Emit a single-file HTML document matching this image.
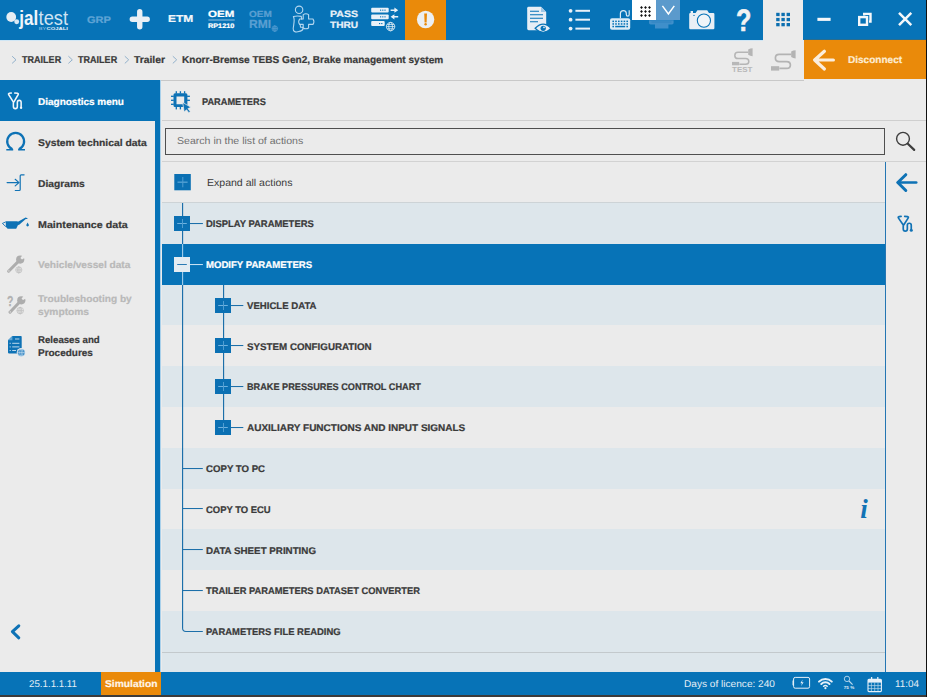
<!DOCTYPE html>
<html><head><meta charset="utf-8"><title>Jaltest - Parameters</title>
<style>
html,body{margin:0;padding:0}
body{width:927px;height:697px;overflow:hidden;background:#ebebeb;font-family:"Liberation Sans",sans-serif;position:relative}
div,span,svg{position:absolute;box-sizing:border-box}
.t{white-space:nowrap;line-height:20px;height:20px;transform-origin:0 50%;}
.b{-webkit-text-stroke:0.22px currentColor}
.row{left:162px;width:723px}
</style></head><body>
<!-- top bar -->
<div id="topbar" style="left:0;top:0;width:926px;height:40px;background:#0773b7"></div>
<div id="topline" style="left:0;top:39.5px;width:763px;height:1px;background:#cfe6f5"></div>
<div id="warn" style="left:405.4px;top:0;width:40.4px;height:39.6px;background:#ea8a0a"></div>
<div id="whitebox" style="left:632.2px;top:0;width:24px;height:19.7px;background:#fff"></div>
<div id="chevbox" style="left:656.2px;top:0;width:23.7px;height:19.7px;background:#5b9acc"></div>
<div id="gridbox" style="left:762.8px;top:0;width:40.7px;height:41px;background:#ebebeb"></div>
<!-- second bar -->
<div id="disconnect" style="left:803.5px;top:40px;width:122.5px;height:39.4px;background:#ea8a0a"></div>
<div id="winline" style="left:803.5px;top:38.6px;width:122.5px;height:1.6px;background:#2a6d8e"></div>
<div id="hline0" style="left:160px;top:79.9px;width:644px;height:1px;background:#c8c8c8"></div>
<!-- sidebar -->
<div id="sidehead" style="left:0;top:79.7px;width:160px;height:41px;background:#0773b7"></div>
<div id="strip" style="left:155px;top:120px;width:5px;height:552px;background:#0773b7"></div>
<div id="strip2" style="left:160px;top:80px;width:1.3px;height:592px;background:#a9d0ea"></div>
<!-- content -->
<div id="hline1" style="left:162px;top:120.3px;width:764px;height:1.2px;background:#cfcfcf"></div>
<div id="search" style="left:165px;top:128px;width:720px;height:26.5px;border:1px solid #4f4f4f;background:#ebebeb"></div>
<div id="hline2" style="left:162px;top:160.8px;width:764px;height:1.2px;background:#d2d2d2"></div>
<div id="hline3" style="left:162px;top:202px;width:723px;height:1px;background:#cdd3d6"></div>
<div class="row" style="top:203.0px;height:40.8px;background:#dde6eb"></div>
<div class="row" style="top:243.8px;height:40.8px;background:#0773b7"></div>
<div class="row" style="top:284.6px;height:40.8px;background:#dde6eb"></div>
<div class="row" style="top:325.4px;height:40.8px;background:#ebebeb"></div>
<div class="row" style="top:366.2px;height:40.8px;background:#dde6eb"></div>
<div class="row" style="top:407.0px;height:40.8px;background:#ebebeb"></div>
<div class="row" style="top:447.8px;height:40.8px;background:#dde6eb"></div>
<div class="row" style="top:488.6px;height:40.8px;background:#ebebeb"></div>
<div class="row" style="top:529.4px;height:40.8px;background:#dde6eb"></div>
<div class="row" style="top:570.2px;height:40.8px;background:#ebebeb"></div>
<div class="row" style="top:611.0px;height:40.8px;background:#dde6eb"></div>
<div id="tail" style="left:162px;top:651.8px;width:723px;height:21px;background:#dde6eb"></div>
<div id="hline4" style="left:162px;top:651.6px;width:723px;height:1.2px;background:#c3c9cc"></div>
<div id="rline" style="left:885px;top:162px;width:1.25px;height:510px;background:#2476b3"></div>
<!-- status bar -->
<div id="status" style="left:0;top:672px;width:926px;height:23.5px;background:#0773b7"></div>
<div id="sim" style="left:101.4px;top:672px;width:59.4px;height:22.6px;background:#ea8a0a"></div>
<div id="botline" style="left:0;top:695.3px;width:927px;height:2px;background:#3b3b3b"></div>
<div id="rightline" style="left:925.8px;top:0;width:1.2px;height:697px;background:#111"></div>
<!-- ===== top bar icons (one overlay svg, page coordinates) ===== -->
<svg id="topicons" width="927" height="82" viewBox="0 0 927 82" style="left:0;top:0">
 <!-- logo -->
 <circle cx="11.2" cy="17" r="4.9" fill="#e6edf3"/>
 <circle cx="16.7" cy="21.8" r="2.45" fill="#d9e9f5"/>
 <text x="19.2" y="24.6" font-family="Liberation Sans, sans-serif" font-size="20" font-weight="bold" fill="#f0f5fa" textLength="19" lengthAdjust="spacingAndGlyphs">jal</text>
 <text x="38.6" y="24.6" font-family="Liberation Sans, sans-serif" font-size="20" fill="#cfe3f3" textLength="29.4" lengthAdjust="spacingAndGlyphs">test</text>
 <text x="38.8" y="29.6" font-family="Liberation Sans, sans-serif" font-size="3.8" fill="#9cc6e6" textLength="7.5" lengthAdjust="spacingAndGlyphs">BY</text>
 <text x="46.6" y="29.6" font-family="Liberation Sans, sans-serif" font-size="3.8" font-weight="bold" fill="#e6f0f8" textLength="21.4" lengthAdjust="spacingAndGlyphs">COJALI</text>
 <!-- big plus -->
 <path d="M132.3,19.3H147.2M139.75,11.8V26.8" stroke="#e9eff5" stroke-width="5.4" stroke-linecap="round" fill="none"/>
 <!-- OEM underline -->
 <rect x="208.4" y="19.6" width="26.3" height="0.8" fill="#b9d7ee"/>
 <!-- tiny globe after RMI -->
 <g stroke="#5a9fd2" stroke-width="0.7" fill="none"><circle cx="274.8" cy="28.6" r="2.8"/><path d="M272,28.6H277.6M274.8,25.8V31.4"/><ellipse cx="274.8" cy="28.6" rx="1.3" ry="2.8"/></g>
 <!-- person + plus (outline) -->
 <g stroke="#b4d7f0" stroke-width="1.1" fill="none" stroke-linejoin="round" stroke-linecap="round">
  <circle cx="299.1" cy="9.8" r="3.7"/>
  <path d="M293.4,16.6 C295.5,15.9 299,15.9 301.3,16.4 L301.6,19.2 M293.4,16.6 C295.2,20 293.6,24.5 293.2,28.5 C293,31.5 295.5,32.3 297.5,31.8 C299.8,31.2 302.5,31 303,29 L302.7,27.2 L300.5,27.3 L300.2,24.5"/>
  <path d="M303.2,14.6 Q305.9,13 308.6,14.6 V19 H313 Q314.8,21.7 313,24.4 H308.6 V28 Q305.9,29.6 303.2,28 V24.4 H299.6 Q297.8,21.7 299.6,19 H303.2 Z"/>
 </g>
 <!-- server / pass-thru icon -->
 <g fill="#e9f1f8">
  <rect x="371.2" y="7.7" width="17.5" height="4.9" rx="1"/>
  <rect x="371.2" y="14.4" width="17.5" height="4.9" rx="1"/>
  <rect x="371.2" y="21.1" width="13.5" height="4.9" rx="1"/>
  <path d="M390.6,9.4H394.4V7.6L398.2,10.2L394.4,12.8V11H390.6Z"/>
  <path d="M398.2,16H394.4V14.2L390.6,16.8L394.4,19.4V17.6H398.2Z"/>
 </g>
 <g fill="#0773b7"><rect x="380" y="9.6" width="1.2" height="1.1"/><rect x="382.2" y="9.6" width="1.2" height="1.1"/><rect x="384.4" y="9.6" width="1.2" height="1.1"/>
  <rect x="380" y="16.3" width="1.2" height="1.1"/><rect x="382.2" y="16.3" width="1.2" height="1.1"/><rect x="384.4" y="16.3" width="1.2" height="1.1"/>
  <rect x="379" y="23" width="1.2" height="1.1"/><rect x="381.2" y="23" width="1.2" height="1.1"/></g>
 <circle cx="390.6" cy="26.6" r="5.2" fill="#0773b7"/>
 <g stroke="#e9f1f8" stroke-width="0.8" fill="none"><circle cx="390.6" cy="26.6" r="4.2"/><ellipse cx="390.6" cy="26.6" rx="1.9" ry="4.2"/><path d="M386.4,26.6H394.8M387.2,24.4H394M387.2,28.8H394"/></g>
 <!-- warning -->
 <circle cx="425.6" cy="19.5" r="8.7" fill="#eceff2"/>
 <path d="M424.2,13.6H427L426.6,22.4H424.6Z" fill="#ea8a0a"/><circle cx="425.6" cy="24.2" r="1.2" fill="#ea8a0a"/>
 <!-- document + eye -->
 <path d="M528.6,6.8H541L546.2,12V28.8Q546.2,30.2 544.8,30.2H528.6Q527.2,30.2 527.2,28.8V8.2Q527.2,6.8 528.6,6.8Z" fill="#e6eef6"/>
 <path d="M541,6.8L546.2,12H541Z" fill="#9fc7e6"/>
 <g stroke="#0773b7" stroke-width="1.1"><path d="M530,11.3H539M530,14.8H543M530,18.3H543M530,21.8H538"/></g>
 <path d="M535.2,28.3Q543.2,20 551,28.3Q543.2,36.4 535.2,28.3Z" fill="#e6eef6" stroke="#0773b7" stroke-width="1.3"/>
 <circle cx="543.2" cy="28.3" r="2.6" fill="#0773b7"/><circle cx="544" cy="27.4" r="0.8" fill="#e6eef6"/>
 <!-- list -->
 <g fill="#e9f1f8"><circle cx="570.6" cy="10.8" r="1.9"/><circle cx="570.6" cy="19.7" r="1.9"/><circle cx="570.6" cy="28.6" r="1.9"/>
  <rect x="575.4" y="9.8" width="14.6" height="2"/><rect x="575.4" y="18.7" width="14.6" height="2"/><rect x="575.4" y="27.6" width="14.6" height="2"/></g>
 <!-- keyboard -->
 <rect x="610" y="18.3" width="20.2" height="11.4" rx="2" fill="#dcebf6"/>
 <g fill="#0773b7"><rect x="612.4" y="20.6" width="1.6" height="1.5"/><rect x="615.2" y="20.6" width="1.6" height="1.5"/><rect x="618" y="20.6" width="1.6" height="1.5"/><rect x="620.8" y="20.6" width="1.6" height="1.5"/><rect x="623.6" y="20.6" width="1.6" height="1.5"/><rect x="626.4" y="20.6" width="1.6" height="1.5"/>
  <rect x="612.4" y="23.2" width="1.6" height="1.5"/><rect x="615.2" y="23.2" width="1.6" height="1.5"/><rect x="618" y="23.2" width="1.6" height="1.5"/><rect x="620.8" y="23.2" width="1.6" height="1.5"/><rect x="623.6" y="23.2" width="1.6" height="1.5"/><rect x="626.4" y="23.2" width="1.6" height="1.5"/>
  <rect x="612.4" y="25.8" width="1.6" height="1.5"/><rect x="615.2" y="25.8" width="10" height="1.5"/><rect x="626.4" y="25.8" width="1.6" height="1.5"/></g>
 <path d="M620.4,18.3V13.6Q620.4,10.6 623.4,10.6Q626.3,10.6 626.3,13.6V14.6Q626.3,16.2 627.8,16.2Q629.2,16.2 629.2,14.6V10.2" stroke="#dcebf6" stroke-width="1.2" fill="none"/>
 <!-- 3x3 black dots in white box -->
 <g fill="#111"><path d="M641.5,6.1l1.4,1.4l-1.4,1.4l-1.4,-1.4zM645.5,6.1l1.4,1.4l-1.4,1.4l-1.4,-1.4zM649.5,6.1l1.4,1.4l-1.4,1.4l-1.4,-1.4zM641.5,10.1l1.4,1.4l-1.4,1.4l-1.4,-1.4zM645.5,10.1l1.4,1.4l-1.4,1.4l-1.4,-1.4zM649.5,10.1l1.4,1.4l-1.4,1.4l-1.4,-1.4zM641.5,14.1l1.4,1.4l-1.4,1.4l-1.4,-1.4zM645.5,14.1l1.4,1.4l-1.4,1.4l-1.4,-1.4zM649.5,14.1l1.4,1.4l-1.4,1.4l-1.4,-1.4z"/></g>
 <!-- chevron in light box -->
 <path d="M662.4,5.9L668.4,14L674.3,5.9" stroke="#ffffff" stroke-width="1.5" fill="none"/>
 <!-- dim connector under boxes -->
 <path d="M649,20.2H673.6V23Q673.6,24.4 672,24.4H668.4V28.4H655V24.4H650.6Q649,24.4 649,23Z" fill="#3f8fca"/>
 <path d="M651.5,22H671.5" stroke="#2f82c0" stroke-width="1"/>
 <!-- camera -->
 <path d="M690.4,12.9H695.6L697.4,10.2H707.2L709,12.9H713.2Q714.4,12.9 714.4,14.1V28.1Q714.4,29.3 713.2,29.3H690.4Q689.2,29.3 689.2,28.1V14.1Q689.2,12.9 690.4,12.9Z" fill="#e9eff5"/>
 <rect x="690.6" y="11" width="2.4" height="2" fill="#e9eff5"/>
 <circle cx="703.9" cy="20.6" r="6.6" fill="#f0f4f8" stroke="#0773b7" stroke-width="1.1"/>
 <circle cx="694" cy="15.4" r="0.7" fill="#0773b7"/>
 <!-- grid 3x3 blue -->
 <g fill="#0c6fb0">
  <rect x="776.2" y="12.8" width="3.4" height="3.3"/><rect x="781.4" y="12.8" width="3.4" height="3.3"/><rect x="786.6" y="12.8" width="3.4" height="3.3"/>
  <rect x="776.2" y="17.9" width="3.4" height="3.3"/><rect x="781.4" y="17.9" width="3.4" height="3.3"/><rect x="786.6" y="17.9" width="3.4" height="3.3"/>
  <rect x="776.2" y="23" width="3.4" height="3.3"/><rect x="781.4" y="23" width="3.4" height="3.3"/><rect x="786.6" y="23" width="3.4" height="3.3"/></g>
 <!-- window controls -->
 <rect x="817.4" y="17.8" width="13.2" height="3.1" fill="#f4f7fa"/>
 <g stroke="#f4f7fa" stroke-width="2.4" fill="none"><path d="M864.2,15.4V13.9H870.5V21.6H869"/><rect x="859.2" y="17.1" width="7.8" height="7.7" fill="none"/></g>
 <path d="M899,12.8L911.3,25.2M911.3,12.8L899,25.2" stroke="#f4f7fa" stroke-width="2.5" fill="none"/>
 <!-- TEST cable icon (dim) -->
 <g stroke="#b5b5b5" stroke-width="1.5" fill="none"><path d="M748.2,52.2H738Q734.8,52.2 734.8,55.4Q734.8,58.6 738,58.6H745.6Q748.8,58.6 748.8,61.4Q748.8,64.2 745.6,64.2H739.4"/></g>
 <path d="M748.2,49.6Q750.2,48.2 752.6,48.2V56.2Q750.2,56.2 748.2,54.8Z" fill="#b5b5b5"/>
 <rect x="732" y="61.9" width="7.2" height="3.4" fill="#b8b8b8"/>
 <text x="732" y="71.8" font-family="Liberation Sans, sans-serif" font-size="7" font-weight="bold" fill="#b8b8b8" textLength="20.4" lengthAdjust="spacingAndGlyphs">TEST</text>
 <!-- cable icon (dim) -->
 <g stroke="#b3b3b3" stroke-width="1.7" fill="none"><path d="M791.4,54.4H779.2Q775.4,54.4 775.4,58Q775.4,61.6 779.2,61.6H786.6Q790.4,61.6 790.4,65Q790.4,68.4 786.6,68.4H779.4"/></g>
 <path d="M791.2,51.6Q793.2,50.2 795.6,50.2V58.4Q793.2,58.4 791.2,57Z" fill="#b3b3b3"/>
 <rect x="771" y="66.2" width="8.2" height="4.4" fill="#b5b5b5"/>
 <!-- disconnect arrow -->
 <path d="M814.6,60H833.4M824.4,51.2L814.6,60L824.4,69" stroke="#fbeedd" stroke-width="3.2" fill="none" stroke-linecap="round" stroke-linejoin="round"/>
<!-- breadcrumb chevrons -->
 <g stroke="#93b2cc" stroke-width="1" fill="none"><path d="M12.1,56.2L16,59.8L12.1,63.4M68.4,56.2L72.3,59.8L68.4,63.4M124.8,56.2L128.7,59.8L124.8,63.4M172.8,56.2L176.7,59.8L172.8,63.4"/></g>
</svg>
<svg id="mainicons" width="927" height="697" viewBox="0 0 927 697" style="left:0;top:0">
<g transform="translate(7.8,92.6) scale(0.97,1.06)" stroke="#f2f6fa" stroke-width="1.6" fill="none" stroke-linejoin="round" stroke-linecap="round"><path d="M3.6,0.4L1.6,0.6Q0.2,0.9 1,2.1L5.75,9V13.1A2.05,2.05 0 0 0 9.85,13.1V9.2A1.95,1.95 0 0 1 13.75,9.2V13.2M6.2,9L10.6,2.1Q11.4,0.9 10,0.6L7.2,0.4"/><circle cx="13.7" cy="14.3" r="1.2" fill="#f2f6fa" stroke="none"/></g>
<g transform="translate(897.5,216)" stroke="#1273b5" stroke-width="1.7" fill="none" stroke-linejoin="round" stroke-linecap="round"><path d="M3.6,0.4L1.6,0.6Q0.2,0.9 1,2.1L5.75,9V13.1A2.05,2.05 0 0 0 9.85,13.1V9.2A1.95,1.95 0 0 1 13.75,9.2V13.2M6.2,9L10.6,2.1Q11.4,0.9 10,0.6L7.2,0.4"/><circle cx="13.8" cy="14.2" r="1.5" fill="#1273b5" stroke="none"/></g>
<g stroke="#0e72b5" fill="none"><path d="M12.5,149.2A8.45,8.45 0 1 1 18.8,149.2" stroke-width="2.2"/><path d="M6.3,149.75H13.2M18.1,149.75H25" stroke-width="1.7"/></g>
<g stroke="#1273b5" stroke-width="1.2" fill="none" stroke-linecap="round" stroke-linejoin="round"><path d="M7.1,182.6H19M15.2,179.3L19,182.6L15.2,185.9"/><path d="M24.1,174.8H21.2Q20.2,174.8 20.2,175.8V189.5Q20.2,190.5 19.2,190.5H15.3"/></g>
<g fill="#0e72b5"><path d="M5.8,221.3H17.2L19.2,222.6L16.2,228.8H7.6L5.8,226.8Z"/><path d="M16.6,222.4L25.6,217.6L27.6,218.2L27.3,219L25.8,218.9L18.6,225.2Z"/><path d="M27.6,222.6Q29.2,225 28.7,225.8Q27.6,227 26.5,225.8Q26,225 27.6,222.6Z"/></g>
<path d="M5.8,221.9L2.4,223.4L5.8,226.6" stroke="#0e72b5" stroke-width="0.9" fill="none"/>
<path d="M8.6,271.2L20.2,259.6" stroke="#adadad" stroke-width="3" stroke-linecap="round"/><circle cx="20.2" cy="259.6" r="4.1" fill="#adadad"/><path d="M20.4,258.0L23.4,254.00000000000003L26.0,257.0L22.0,259.40000000000003Z" fill="#ebebeb"/><circle cx="8.9" cy="270.9" r="0.7" fill="#e4e4e4"/>
<g stroke="#bdbdbd" stroke-width="0.7" fill="none"><circle cx="18.8" cy="269.9" r="3.1"/><ellipse cx="18.8" cy="269.9" rx="1.40" ry="3.1"/><path d="M15.700000000000001,269.9H21.900000000000002M18.8,266.79999999999995V273.0"/></g>
<path d="M10,312.2L21.3,300.3" stroke="#adadad" stroke-width="3" stroke-linecap="round"/><circle cx="21.3" cy="300.3" r="4.1" fill="#adadad"/><path d="M21.5,298.7L24.5,294.7L27.1,297.7L23.1,300.1Z" fill="#ebebeb"/><circle cx="10.3" cy="311.9" r="0.7" fill="#e4e4e4"/>
<g stroke="#bdbdbd" stroke-width="0.7" fill="none"><circle cx="20.2" cy="310.6" r="3.3"/><ellipse cx="20.2" cy="310.6" rx="1.48" ry="3.3"/><path d="M16.9,310.6H23.5M20.2,307.3V313.90000000000003"/></g>
<text x="6.9" y="306" font-family="Liberation Sans, sans-serif" font-size="14" font-weight="bold" fill="#b2b2b2" stroke="#b2b2b2" stroke-width="0.3" textLength="6.4" lengthAdjust="spacingAndGlyphs">?</text>
<path d="M12.4,335.9H20.9Q21.7,335.9 21.7,336.7V352.6Q21.7,353.4 20.9,353.4H8.8Q8,353.4 8,352.6V340.2Z" fill="#0e72b5"/>
<path d="M12.4,335.9V340.2H8Z" fill="#5ea5d6"/>
<g stroke="#cfe3f2" stroke-width="0.9"><path d="M15,339H19.4M9.6,343.3H10.8M12.2,343.3H19.4M9.6,346.9H10.8M12.2,346.9H19.4M9.6,350.5H10.8M12.2,350.5H16"/></g>
<circle cx="21.3" cy="352.6" r="4.6" fill="#ebebeb"/><circle cx="21.3" cy="352.6" r="3.7" fill="#2a80bf"/>
<g stroke="#cfe3f2" stroke-width="0.6" fill="none"><circle cx="21.3" cy="352.6" r="3.7"/><ellipse cx="21.3" cy="352.6" rx="1.67" ry="3.7"/><path d="M17.6,352.6H25.0M21.3,348.90000000000003V356.3"/></g>
<path d="M18.8,625.8L12.4,631.7L18.8,637.8" stroke="#0e72b5" stroke-width="3" fill="none" stroke-linecap="round" stroke-linejoin="round"/>
<g fill="#0e72b5">
<path fill-rule="evenodd" d="M175,93.3H185.9Q187.4,93.3 187.4,94.8V105.6Q187.4,107.1 185.9,107.1H175Q173.5,107.1 173.5,105.6V94.8Q173.5,93.3 175,93.3ZM176.5,96.6V104.2H184.2V96.6Z"/>
<rect x="175.65" y="91.2" width="1.3" height="2.4"/>
<rect x="179.75" y="91.2" width="1.3" height="2.4"/>
<rect x="183.95" y="91.2" width="1.3" height="2.4"/>
<rect x="175.65" y="106.8" width="1.3" height="2.6"/>
<rect x="179.75" y="106.8" width="1.3" height="2.6"/>
<rect x="171" y="95.64999999999999" width="2.8" height="1.3"/>
<rect x="171" y="99.64999999999999" width="2.8" height="1.3"/>
<rect x="171" y="103.64999999999999" width="2.8" height="1.3"/>
<rect x="187.1" y="95.64999999999999" width="2.8" height="1.3"/>
<rect x="187.1" y="99.64999999999999" width="2.8" height="1.3"/>
</g>
<path d="M182.7,102.5L191,107.3L187.9,108.6L190.3,111.6L188.8,112.7L186.5,109.7L184.2,112Z" fill="#0e72b5" stroke="#ebebeb" stroke-width="0.7"/>
<circle cx="903" cy="138.8" r="6.4" stroke="#3d3d3d" stroke-width="1.4" fill="none"/><path d="M907.8,143.8L914.2,149.9" stroke="#3d3d3d" stroke-width="2.2" stroke-linecap="round"/>
<path d="M898,182.5H916.2" stroke="#0e72b5" stroke-width="2.7" stroke-linecap="round" fill="none"/><path d="M905.8,174.7L897.8,182.5L905.8,190.5" stroke="#0e72b5" stroke-width="3" stroke-linecap="round" stroke-linejoin="round" fill="none"/>
<rect x="182" y="203" width="1.15" height="41" fill="#1c6fa9"/>
<rect x="182" y="244" width="1.15" height="41" fill="#9ccbea"/>
<rect x="182" y="285" width="1.15" height="343" fill="#1c6fa9"/>
<path d="M182.55,628Q182.55,631.5 186,631.5H202.8" stroke="#1c6fa9" stroke-width="1.1" fill="none"/>
<rect x="223" y="285" width="1.15" height="142" fill="#1c6fa9"/>
<rect x="190" y="223" width="12.9" height="1.05" fill="#1c6fa9"/>
<rect x="174" y="216" width="16" height="15" fill="#0b70b3"/><rect x="177.2" y="223.0" width="9.6" height="1" fill="#6fb2df"/><rect x="182.0" y="219" width="1" height="9" fill="#4f9dd2"/>
<rect x="190" y="264" width="12.9" height="1.05" fill="#c5e0f3"/>
<rect x="174" y="257" width="16" height="15" fill="#e4ecf2"/><rect x="177.2" y="264.0" width="9.6" height="1" fill="#2b7ab3"/>
<rect x="231" y="305" width="12.3" height="1.05" fill="#1c6fa9"/>
<rect x="215" y="298" width="16" height="15" fill="#0b70b3"/><rect x="218.2" y="305.0" width="9.6" height="1" fill="#6fb2df"/><rect x="223.0" y="301" width="1" height="9" fill="#4f9dd2"/>
<rect x="231" y="345" width="12.3" height="1.05" fill="#1c6fa9"/>
<rect x="215" y="338" width="16" height="15" fill="#0b70b3"/><rect x="218.2" y="345.0" width="9.6" height="1" fill="#6fb2df"/><rect x="223.0" y="341" width="1" height="9" fill="#4f9dd2"/>
<rect x="231" y="386" width="12.3" height="1.05" fill="#1c6fa9"/>
<rect x="215" y="379" width="16" height="15" fill="#0b70b3"/><rect x="218.2" y="386.0" width="9.6" height="1" fill="#6fb2df"/><rect x="223.0" y="382" width="1" height="9" fill="#4f9dd2"/>
<rect x="231" y="427" width="12.3" height="1.05" fill="#1c6fa9"/>
<rect x="215" y="420" width="16" height="15" fill="#0b70b3"/><rect x="218.2" y="427.0" width="9.6" height="1" fill="#6fb2df"/><rect x="223.0" y="423" width="1" height="9" fill="#4f9dd2"/>
<rect x="182" y="468" width="20.8" height="1.05" fill="#1c6fa9"/>
<rect x="182" y="508" width="20.8" height="1.05" fill="#1c6fa9"/>
<rect x="182" y="549" width="20.8" height="1.05" fill="#1c6fa9"/>
<rect x="182" y="590" width="20.8" height="1.05" fill="#1c6fa9"/>
<rect x="174.3" y="174" width="16.5" height="16.3" fill="#0b70b3"/><rect x="177.5" y="181.65" width="10.1" height="1" fill="#6fb2df"/><rect x="182.3" y="177" width="1" height="10.3" fill="#4f9dd2"/>
<text x="860.2" y="518" font-family="Liberation Serif, serif" font-size="27" font-weight="bold" font-style="italic" fill="#1273b5">i</text>
<rect x="793.6" y="677.4" width="16" height="10.8" rx="1.6" stroke="#e6f0f8" stroke-width="1" fill="none"/><path d="M793.2,680.4V685.2" stroke="#e6f0f8" stroke-width="1.4"/>
<path d="M802.6,679.4L800.4,683.2H802L801,686.2L803.6,682.2H802Z" fill="#e6f0f8"/>
<g stroke="#e6f0f8" fill="none" stroke-width="2" stroke-linecap="round"><path d="M819,681.6A9,9 0 0 1 831.8,681.6"/><path d="M821.3,684A5.8,5.8 0 0 1 829.5,684"/><path d="M823.6,686.3A2.6,2.6 0 0 1 827.2,686.3" stroke-width="1.5"/></g><circle cx="825.4" cy="688.2" r="1.1" fill="#e6f0f8"/>
<circle cx="847" cy="678.9" r="2.7" stroke="#b9d9ef" stroke-width="0.9" fill="none"/><path d="M849,681L852.6,684.6" stroke="#b9d9ef" stroke-width="1.1"/>
<text x="843.8" y="688.9" font-family="Liberation Sans, sans-serif" font-size="3.8" font-weight="bold" fill="#e6f0f8" textLength="10.4" lengthAdjust="spacingAndGlyphs">75 %</text>
<rect x="868" y="679.4" width="13.4" height="12.2" rx="1" stroke="#e6f0f8" stroke-width="1.1" fill="none"/><rect x="868" y="679.4" width="13.4" height="3.2" fill="#e6f0f8"/>
<path d="M871.6,677V681M877.8,677V681" stroke="#e6f0f8" stroke-width="1.3"/>
<path d="M868,685.6H881.4M868,688.6H881.4M871.4,682.6V691.6M874.7,682.6V691.6M878,682.6V691.6" stroke="#e6f0f8" stroke-width="0.7" opacity="0.8"/>
</svg>
<span class="t b" id="t0" style="left:21.9px;top:49.88px;font-size:10px;font-weight:bold;color:#3a3a3a;transform:scaleX(0.9042) rotate(0.03deg);">TRAILER</span>
<span class="t b" id="t1" style="left:78px;top:49.88px;font-size:10px;font-weight:bold;color:#3a3a3a;transform:scaleX(0.9042) rotate(0.03deg);">TRAILER</span>
<span class="t b" id="t2" style="left:134px;top:49.88px;font-size:10px;font-weight:bold;color:#3a3a3a;transform:scaleX(1.0319) rotate(0.03deg);">Trailer</span>
<span class="t b" id="t3" style="left:182px;top:49.88px;font-size:10px;font-weight:bold;color:#3a3a3a;transform:scaleX(1.0063) rotate(0.03deg);">Knorr-Bremse TEBS Gen2, Brake management system</span>
<span class="t b" id="t4" style="left:38.3px;top:92.49px;font-size:9.8px;font-weight:bold;color:#ffffff;transform:scaleX(1.0189) rotate(0.03deg);">Diagnostics menu</span>
<span class="t b" id="t5" style="left:38.3px;top:133.39px;font-size:9.8px;font-weight:bold;color:#3a3a3a;transform:scaleX(1.0560) rotate(0.03deg);">System technical data</span>
<span class="t b" id="t6" style="left:38.3px;top:174.29px;font-size:9.8px;font-weight:bold;color:#3a3a3a;transform:scaleX(1.0455) rotate(0.03deg);">Diagrams</span>
<span class="t b" id="t7" style="left:38.3px;top:215.09px;font-size:9.8px;font-weight:bold;color:#3a3a3a;transform:scaleX(1.0909) rotate(0.03deg);">Maintenance data</span>
<span class="t b" id="t8" style="left:38.3px;top:255.39px;font-size:9.8px;font-weight:bold;color:#b9b9b9;transform:scaleX(1.0343) rotate(0.03deg);">Vehicle/vessel data</span>
<span class="t b" id="t9" style="left:38.3px;top:288.79px;font-size:9.8px;font-weight:bold;color:#b9b9b9;transform:scaleX(1.0308) rotate(0.03deg);">Troubleshooting by</span>
<span class="t b" id="t10" style="left:38.3px;top:302.29px;font-size:9.8px;font-weight:bold;color:#b9b9b9;transform:scaleX(1.0406) rotate(0.03deg);">symptoms</span>
<span class="t b" id="t11" style="left:38.3px;top:330.39px;font-size:9.8px;font-weight:bold;color:#3a3a3a;transform:scaleX(0.9848) rotate(0.03deg);">Releases and</span>
<span class="t b" id="t12" style="left:38.3px;top:342.89px;font-size:9.8px;font-weight:bold;color:#3a3a3a;transform:scaleX(1.0179) rotate(0.03deg);">Procedures</span>
<span class="t b" id="t13" style="left:201.7px;top:92.29px;font-size:9.7px;font-weight:bold;color:#3a3a3a;transform:scaleX(0.9505) rotate(0.03deg);">PARAMETERS</span>
<span class="t" id="t14" style="left:177.2px;top:130.89px;font-size:9.9px;font-weight:normal;color:#707070;transform:scaleX(1.0693) rotate(0.03deg);">Search in the list of actions</span>
<span class="t" id="t15" style="left:206.5px;top:173.38px;font-size:10.2px;font-weight:normal;color:#3a3a3a;transform:scaleX(1.0339) rotate(0.03deg);">Expand all actions</span>
<span class="t b" id="t16" style="left:206.3px;top:214.29px;font-size:9.7px;font-weight:bold;color:#3a3a3a;transform:scaleX(0.9735) rotate(0.03deg);">DISPLAY PARAMETERS</span>
<span class="t b" id="t17" style="left:206.3px;top:255.09px;font-size:9.7px;font-weight:bold;color:#ffffff;transform:scaleX(0.9887) rotate(0.03deg);">MODIFY PARAMETERS</span>
<span class="t b" id="t18" style="left:246.8px;top:295.89px;font-size:9.7px;font-weight:bold;color:#3a3a3a;transform:scaleX(0.9905) rotate(0.03deg);">VEHICLE DATA</span>
<span class="t b" id="t19" style="left:246.8px;top:336.69px;font-size:9.7px;font-weight:bold;color:#3a3a3a;transform:scaleX(1.0087) rotate(0.03deg);">SYSTEM CONFIGURATION</span>
<span class="t b" id="t20" style="left:246.8px;top:377.49px;font-size:9.7px;font-weight:bold;color:#3a3a3a;transform:scaleX(0.9455) rotate(0.03deg);">BRAKE PRESSURES CONTROL CHART</span>
<span class="t b" id="t21" style="left:246.8px;top:418.29px;font-size:9.7px;font-weight:bold;color:#3a3a3a;transform:scaleX(1.0311) rotate(0.03deg);">AUXILIARY FUNCTIONS AND INPUT SIGNALS</span>
<span class="t b" id="t22" style="left:206.3px;top:459.09px;font-size:9.7px;font-weight:bold;color:#3a3a3a;transform:scaleX(0.9947) rotate(0.03deg);">COPY TO PC</span>
<span class="t b" id="t23" style="left:206.3px;top:499.89px;font-size:9.7px;font-weight:bold;color:#3a3a3a;transform:scaleX(0.9742) rotate(0.03deg);">COPY TO ECU</span>
<span class="t b" id="t24" style="left:206.3px;top:540.69px;font-size:9.7px;font-weight:bold;color:#3a3a3a;transform:scaleX(1.0084) rotate(0.03deg);">DATA SHEET PRINTING</span>
<span class="t b" id="t25" style="left:206.3px;top:581.49px;font-size:9.7px;font-weight:bold;color:#3a3a3a;transform:scaleX(0.9627) rotate(0.03deg);">TRAILER PARAMETERS DATASET CONVERTER</span>
<span class="t b" id="t26" style="left:206.3px;top:622.29px;font-size:9.7px;font-weight:bold;color:#3a3a3a;transform:scaleX(0.9743) rotate(0.03deg);">PARAMETERS FILE READING</span>
<span class="t" id="t27" style="left:28.7px;top:674.19px;font-size:9.8px;font-weight:normal;color:#e4eef6;transform:scaleX(0.9933) rotate(0.03deg);">25.1.1.1.11</span>
<span class="t b" id="t28" style="left:104.5px;top:674.19px;font-size:9.8px;font-weight:bold;color:#fff4e6;transform:scaleX(1.0481) rotate(0.03deg);">Simulation</span>
<span class="t" id="t29" style="left:684.3px;top:674.19px;font-size:9.8px;font-weight:normal;color:#e4eef6;transform:scaleX(1.0312) rotate(0.03deg);">Days of licence: 240</span>
<span class="t" id="t30" style="left:895px;top:674.19px;font-size:9.8px;font-weight:normal;color:#e4eef6;transform:scaleX(1.0081) rotate(0.03deg);">11:04</span>
<span class="t b" id="t31" style="left:848.2px;top:49.88px;font-size:10px;font-weight:bold;color:#fdecd2;transform:scaleX(1.0034) rotate(0.03deg);">Disconnect</span>
<span class="t b" id="t32" style="left:87px;top:9.89px;font-size:9.6px;font-weight:bold;color:#5fa4d5;transform:scaleX(1.1534) rotate(0.03deg);">GRP</span>
<span class="t b" id="t33" style="left:168px;top:9.48px;font-size:10.1px;font-weight:bold;color:#f2f6fa;transform:scaleX(1.1865) rotate(0.03deg);">ETM</span>
<span class="t b" id="t34" style="left:208.4px;top:4.20px;font-size:9px;font-weight:bold;color:#ffffff;transform:scaleX(1.2813) rotate(0.03deg);">OEM</span>
<span class="t b" id="t35" style="left:208.4px;top:16.33px;font-size:6.5px;font-weight:bold;color:#ffffff;transform:scaleX(1.1187) rotate(0.03deg);">RP1210</span>
<span class="t b" id="t36" style="left:248.8px;top:4.20px;font-size:8.8px;font-weight:bold;color:#5a9fd2;transform:scaleX(1.1367) rotate(0.03deg);">OEM</span>
<span class="t b" id="t37" style="left:249px;top:13.57px;font-size:11.7px;font-weight:bold;color:#5a9fd2;transform:scaleX(1.0351) rotate(0.03deg);">RMI</span>
<span class="t b" id="t38" style="left:329.8px;top:4.19px;font-size:9.2px;font-weight:bold;color:#e9f1f8;transform:scaleX(1.1538) rotate(0.03deg);">PASS</span>
<span class="t b" id="t39" style="left:329.8px;top:14.79px;font-size:9.2px;font-weight:bold;color:#e9f1f8;transform:scaleX(1.1002) rotate(0.03deg);">THRU</span>
<span class="t b" id="t40" style="left:736.2px;top:11.44px;font-size:31px;font-weight:bold;color:#f2f2f2;transform:scaleX(0.8128) rotate(0.03deg);-webkit-text-stroke:0.6px #f2f2f2;">?</span>
</body></html>
